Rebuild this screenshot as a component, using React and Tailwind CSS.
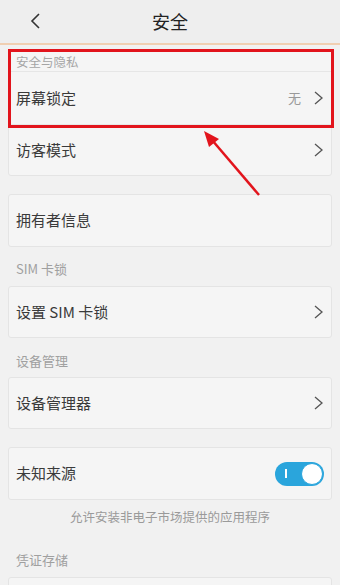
import React from 'react';

const font = { fontFamily: '"Noto Sans CJK SC", "Noto Sans", sans-serif' };

const Chevron = () => (
  <svg width="11" height="16" viewBox="0 0 11 16" className="text-[#555]">
    <polyline points="2,2 9,8 2,14" fill="none" stroke="currentColor" strokeWidth="1.3" />
  </svg>
);

const Row = ({ label, value, chevron = true, children, className = '' }) => (
  <div className={`flex items-center justify-between pl-[7px] pr-[7px] ${className}`}>
    <span className="text-[15px] text-[#3a3a3a]">{label}</span>
    <div className="flex items-center gap-[12px]">
      {value && <span className="text-[13px] text-[#999]">{value}</span>}
      {chevron && <Chevron />}
      {children}
    </div>
  </div>
);

const Card = ({ children, className = '' }) => (
  <div className={`mx-[8px] rounded-[3px] border border-[#e4e4e4] bg-[#f5f5f5] ${className}`}>
    {children}
  </div>
);

const SectionLabel = ({ children, className = '' }) => (
  <div className={`px-[16px] text-[13px] text-[#a0a0a0] flex items-center ${className}`}>{children}</div>
);

export default function App() {
  return (
    <div className="relative w-[340px] h-[585px] overflow-hidden bg-[#f1f1f1]" style={font}>
      {/* Header */}
      <div className="h-[45px] bg-[#eeeeee] border-b-2 border-[#f0cfb2] flex items-center relative">
        <svg width="12" height="18" viewBox="0 0 12 18" className="absolute left-[30px] top-[12px] text-[#333]">
          <polyline points="9,2 2,9 9,16" fill="none" stroke="currentColor" strokeWidth="1.6" />
        </svg>
        <div className="flex-1 text-center text-[18px] text-[#222]">安全</div>
      </div>

      {/* Security & privacy */}
      <Card className="mt-[5px]">
        <div className="h-[21px] flex items-center pl-[7px] pt-[2px] text-[12.5px] text-[#a5a5a5] border-b border-[#e6e6e6]">
          安全与隐私
        </div>
        <Row label="屏幕锁定" value="无" className="h-[53px] border-b border-[#e6e6e6]" />
        <Row label="访客模式" className="h-[50px]" />
      </Card>

      <Card className="mt-[18px]">
        <Row label="拥有者信息" chevron={false} className="h-[51px]" />
      </Card>

      <SectionLabel className="h-[39px] pt-[5px]">SIM 卡锁</SectionLabel>
      <Card>
        <Row label="设置 SIM 卡锁" className="h-[50px]" />
      </Card>

      <SectionLabel className="h-[39px] pt-[6px]">设备管理</SectionLabel>
      <Card>
        <Row label="设备管理器" className="h-[50px]" />
      </Card>

      <Card className="mt-[18px]">
        <Row label="未知来源" chevron={false} className="h-[51px]">
          <div className="w-[49px] h-[24px] rounded-full bg-[#2aa5dc] flex items-center justify-between pl-[10px] pr-[1px]">
            <div className="w-[2px] h-[9px] bg-white" />
            <div className="w-[22px] h-[22px] rounded-full bg-white border border-[#2aa5dc]" />
          </div>
        </Row>
      </Card>
      <div className="h-[34px] flex items-center justify-center text-[12.5px] text-[#9a9a9a]">
        允许安装非电子市场提供的应用程序
      </div>

      <SectionLabel className="h-[43px] pt-[8px]">凭证存储</SectionLabel>
      <Card className="h-[40px]" />

      {/* Annotation overlay */}
      <div className="absolute left-[8px] top-[49px] w-[326px] h-[79px] border-[3px] border-[#e2141c]" />
      <svg className="absolute left-0 top-0" width="340" height="585" viewBox="0 0 340 585">
        <line x1="259" y1="195" x2="212" y2="140" stroke="#e2141c" strokeWidth="2.5" />
        <polygon points="204,131 219,139 209,147" fill="#e2141c" />
      </svg>
    </div>
  );
}
